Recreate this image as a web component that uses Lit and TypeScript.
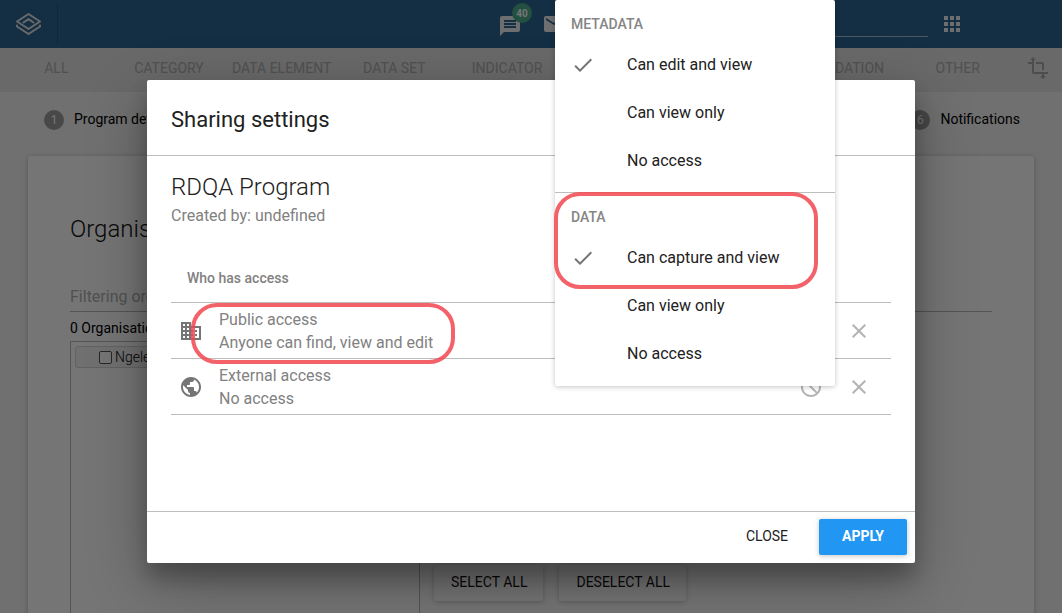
import { LitElement, html, css, svg, nothing } from "lit";
import { customElement, property, state } from "lit/decorators.js";

const icons: Record<string, unknown> = {
  message: svg`<path d="M20 2H4c-1.1 0-1.99.9-1.99 2L2 22l4-4h14c1.1 0 2-.9 2-2V4c0-1.1-.9-2-2-2zm-2 12H6v-2h12v2zm0-3H6V9h12v2zm0-3H6V6h12v2z"/>`,
  mail: svg`<path d="M20 4H4c-1.1 0-1.99.9-1.99 2L2 18c0 1.1.9 2 2 2h16c1.1 0 2-.9 2-2V6c0-1.1-.9-2-2-2zm0 4l-8 5-8-5V6l8 5 8-5v2z"/>`,
  apps: svg`<path d="M4 8h4V4H4v4zm6 12h4v-4h-4v4zm-6 0h4v-4H4v4zm0-6h4v-4H4v4zm6 0h4v-4h-4v4zm6-10v4h4V4h-4zm-6 4h4V4h-4v4zm6 6h4v-4h-4v4zm0 6h4v-4h-4v4z"/>`,
  transform: svg`<path d="M22 18v-2H8V4h2L7 1 4 4h2v2H2v2h4v8c0 1.1.9 2 2 2h8v2h-2l3 3 3-3h-2v-2h4zM10 8h6v6h2V8c0-1.1-.9-2-2-2h-6v2z"/>`,
  business: svg`<path d="M12 7V3H2v18h20V7H12zM6 19H4v-2h2v2zm0-4H4v-2h2v2zm0-4H4V9h2v2zm0-4H4V5h2v2zm4 12H8v-2h2v2zm0-4H8v-2h2v2zm0-4H8V9h2v2zm0-4H8V5h2v2zm10 12h-8v-2h2v-2h-2v-2h2v-2h-2V9h8v10zm-2-8h-2v2h2v-2zm0 4h-2v2h2v-2z"/>`,
  globe: svg`<path d="M12 2C6.48 2 2 6.48 2 12s4.48 10 10 10 10-4.48 10-10S17.52 2 12 2zm-1 17.93c-3.95-.49-7-3.85-7-7.93 0-.62.08-1.21.21-1.79L9 15v1c0 1.1.9 2 2 2v1.93zm6.9-2.54c-.26-.81-1-1.39-1.9-1.39h-1v-3c0-.55-.45-1-1-1H8v-2h2c.55 0 1-.45 1-1V7h2c1.1 0 2-.9 2-2v-.41c2.93 1.19 5 4.06 5 7.41 0 2.08-.8 3.97-2.1 5.39z"/>`,
  block: svg`<path d="M12 2C6.48 2 2 6.48 2 12s4.48 10 10 10 10-4.48 10-10S17.52 2 12 2zm0 18c-4.42 0-8-3.58-8-8 0-1.85.63-3.55 1.69-4.9L16.9 18.31C15.55 19.37 13.85 20 12 20zm6.31-3.1L7.1 5.69C8.45 4.63 10.15 4 12 4c4.42 0 8 3.58 8 8 0 1.85-.63 3.55-1.69 4.9z"/>`,
  close: svg`<path d="M19 6.41L17.59 5 12 10.59 6.41 5 5 6.41 10.59 12 5 17.59 6.41 19 12 13.41 17.59 19 19 17.59 13.41 12z"/>`,
  check: svg`<path d="M9 16.17L4.83 12l-1.42 1.41L9 19 21 7l-1.41-1.41z"/>`,
};

const icon = (name: string) =>
  html`<svg class="icon" width="24" height="24" viewBox="0 0 24 24" fill="currentColor" aria-hidden="true">${icons[name]}</svg>`;

const base = css`
  * { box-sizing: border-box; }
  h1, h2, h3, p, ul { margin: 0; padding: 0; }
  ul { list-style: none; }
  button, input { font-family: inherit; }
  button { border: 0; background: none; padding: 0; cursor: pointer; }
  .icon { display: block; flex: none; }
`;

@customElement("app-header")
class AppHeader extends LitElement {
  static styles = [base, css`
    :host { display: block; }
    .bar { height: 48px; background: #2c6693; color: #fff; display: flex; align-items: center; }
    .home { width: 58px; height: 42px; padding-left: 16px; display: flex; align-items: center; border-right: 1px solid #24557b; color: #e4e6e8; }
    .tools { flex: 1; display: flex; justify-content: flex-end; align-items: center; padding-right: 98px; color: #eef0f2; }
    .message { position: relative; display: flex; padding-top: 4px; margin-right: 20px; }
    .badge { position: absolute; left: 14px; top: -7px; width: 20px; height: 20px; border-radius: 50%; background: #4cae8c; color: #fff; font: 700 10px/21px Roboto, sans-serif; text-align: center; }
    .mail { display: flex; }
    .search { width: 250px; margin: 0 12px 0 112px; height: 26px; border: 0; border-bottom: 1px solid #a9bdce; background: none; color: #fff; align-self: center; }
    .apps { display: flex; }
    .tabs { height: 44px; padding-bottom: 4px; background: #e4e4e4; display: flex; align-items: center; }
    .tab { flex: 1 1 0; min-width: 0; text-align: center; font: 400 14px/20px Roboto, sans-serif; color: #b0b0b0; text-decoration: none; white-space: nowrap; }
    .resize { width: 48px; display: flex; justify-content: center; color: #a8a8a8; }
    .mail, .apps, .message { color: inherit; }
  `];

  private tabs = ["ALL", "CATEGORY", "DATA ELEMENT", "DATA SET", "INDICATOR", "ORGANISATION UNIT", "PROGRAM", "VALIDATION", "OTHER"];

  render() {
    return html`
      <header class="bar">
        <a class="home" href="#" aria-label="Home">
          <svg width="25" height="24" viewBox="0 0 25 24" fill="none" stroke="currentColor" stroke-width="2" stroke-linejoin="round" stroke-linecap="round" aria-hidden="true">
            <path d="M12.5 2L24 9.5 12.5 17 1 9.5z" />
            <path d="M1 13.5v1L12.5 22 24 14.5v-1" />
            <path d="M7.500 10.500l5-3.300 5 3.300" />
          </svg>
        </a>
        <div class="tools">
          <button class="message" aria-label="Messages">${icon("message")}<span class="badge">40</span></button>
          <button class="mail" aria-label="Interpretations">${icon("mail")}</button>
          <input class="search" type="text" aria-label="Search apps" />
          <button class="apps" aria-label="Apps">${icon("apps")}</button>
        </div>
      </header>
      <nav class="tabs">
        ${this.tabs.map((t) => html`<a class="tab" href="#">${t}</a>`)}
        <button class="resize" aria-label="Resize">${icon("transform")}</button>
      </nav>`;
  }
}

@customElement("program-form")
class ProgramForm extends LitElement {
  static styles = [base, css`
    :host { display: block; padding: 0 28px; }
    .steps { height: 64px; padding: 0 14px 8px 16px; display: flex; justify-content: space-between; align-items: center; }
    .step { display: flex; align-items: center; gap: 10px; font: 400 14px/20px Roboto, sans-serif; color: #000; }
    .label { padding-bottom: 2px; }
    .number { width: 20px; height: 20px; border-radius: 50%; background: #9e9e9e; color: #fff; font-size: 12px; text-align: center; }
    .card { background: #fff; border-radius: 2px; box-shadow: 0 1px 6px rgba(0,0,0,.12), 0 1px 4px rgba(0,0,0,.12); padding: 56px 42px; }
    .heading { font: 300 24px/34px Roboto, sans-serif; color: #111; }
    .filter { display: block; width: 100%; margin-top: 36px; height: 30px; padding: 0; border: 0; border-bottom: 1px solid #b8b8b8; background: none; font: 400 16px/24px Roboto, sans-serif; }
    .filter::placeholder { color: #b0b0b0; opacity: 1; }
    .count { margin-top: 6px; font: 400 14px/20px Roboto, sans-serif; color: #000; }
    .units { margin-top: 3px; display: grid; grid-template-columns: 350px 1fr; gap: 14px; }
    .tree { height: 300px; padding: 4px; border: 1px solid #b8b8b8; }
    .node { display: flex; align-items: center; height: 22px; padding-left: 23px; gap: 3px; border: 1px solid #d6d6d6; border-radius: 3px; background: #f5f5f5; font: 300 14px/20px Roboto, sans-serif; color: #000; }
    .node input { appearance: none; width: 13px; height: 13px; margin: 0; border: 1px solid #555; border-radius: 2px; background: #fff; }
    .actions { align-self: end; display: flex; gap: 16px; padding-bottom: 40px; }
    .raised { height: 36px; padding: 0 16px 2px 17px; border-radius: 2px; background: #fff; color: #111; font: 400 14px/34px Roboto, sans-serif; box-shadow: 0 1px 6px rgba(0,0,0,.12), 0 1px 4px rgba(0,0,0,.12); }
  `];

  render() {
    return html`
      <div class="steps">
        <div class="step"><span class="number">1</span><span class="label">Program details</span></div>
        <div class="step"><span class="number">6</span><span class="label">Notifications</span></div>
      </div>
      <section class="card">
        <h2 class="heading">Organisation units</h2>
        <input class="filter" type="text" aria-label="Filter" placeholder="Filtering organisation units by name" />
        <p class="count">0 Organisation units selected</p>
        <div class="units">
          <div class="tree"><label class="node"><input type="checkbox" />Ngelehun</label></div>
          <div class="actions">
            <button class="raised">SELECT ALL</button>
            <button class="raised">DESELECT ALL</button>
          </div>
        </div>
      </section>`;
  }
}

@customElement("access-menu")
class AccessMenu extends LitElement {
  static styles = [base, css`
    :host { display: block; width: 280px; padding-bottom: 1px; background: #fff; border-radius: 2px; box-shadow: 0 1px 6px rgba(0,0,0,.12), 0 1px 4px rgba(0,0,0,.12); }
    .group { position: relative; padding: 8px 0 7px; }
    .group + .group { border-top: 1px solid #bdbdbd; }
    .title { padding: 0 0 1px 16px; font: 500 14px/32px Roboto, sans-serif; color: #858585; }
    .option { width: 100%; height: 48px; padding-left: 16px; display: flex; align-items: center; text-align: left; font: 400 16px/24px Roboto, sans-serif; color: #212121; }
    .mark { width: 56px; height: 24px; color: #757575; }
    .ring { position: absolute; left: -1px; top: -1px; width: 264px; height: 97px; border: 4px solid rgba(242,72,80,.86); border-radius: 26px; pointer-events: none; }
  `];

  @property({ attribute: false }) groups: { title: string; options: string[]; ring?: boolean }[] = [
    { title: "METADATA", options: ["Can edit and view", "Can view only", "No access"] },
    { title: "DATA", options: ["Can capture and view", "Can view only", "No access"], ring: true },
  ];

  @state() private chosen = [0, 0];

  private choose(group: number, option: number) {
    this.chosen = this.chosen.map((c, i) => (i === group ? option : c));
  }

  render() {
    return html`${this.groups.map((g, gi) => html`
      <div class="group" role="group" aria-label=${g.title}>
        <h3 class="title">${g.title}</h3>
        ${g.options.map((o, oi) => html`
          <button class="option" role="menuitemradio" aria-checked=${this.chosen[gi] === oi} @click=${() => this.choose(gi, oi)}>
            <span class="mark">${this.chosen[gi] === oi ? icon("check") : nothing}</span>${o}
          </button>`)}
        ${g.ring ? html`<div class="ring"></div>` : nothing}
      </div>`)}`;
  }
}

@customElement("sharing-dialog")
class SharingDialog extends LitElement {
  static styles = [base, css`
    :host { display: block; position: relative; width: 100%; max-width: 768px; background: #fff; border-radius: 2px; box-shadow: 0 19px 60px rgba(0,0,0,.3), 0 15px 20px rgba(0,0,0,.22); font-family: Roboto, sans-serif; }
    .title { padding: 24px 24px 19px; border-bottom: 1px solid #bdbdbd; font-size: 22px; line-height: 32px; font-weight: 400; color: #212121; }
    .body { padding: 16px 24px 96px; }
    .name { font-size: 24px; line-height: 30px; font-weight: 300; color: #212121; }
    .author { font-size: 16px; line-height: 28px; color: #818181; }
    .who { margin-top: 24px; padding-left: 16px; border-bottom: 1px solid #bdbdbd; font-size: 14px; line-height: 48px; font-weight: 500; color: #818181; }
    .row { position: relative; height: 56px; padding: 0 8px; border-bottom: 1px solid #bdbdbd; display: flex; align-items: center; color: #757575; }
    .text { flex: 1; padding-left: 16px; font-size: 16px; line-height: 23px; color: #818181; }
    .action { width: 48px; height: 48px; display: flex; align-items: center; justify-content: center; color: #b3b3b3; }
    .ring { position: absolute; left: 20px; top: 0; width: 264px; height: 61px; border: 4px solid rgba(242,72,80,.86); border-radius: 26px; pointer-events: none; }
    .footer { border-top: 1px solid #bdbdbd; padding: 7px 8px 8px; display: flex; justify-content: flex-end; gap: 8px; }
    .button { min-width: 88px; height: 36px; padding-bottom: 2px; border-radius: 2px; font-size: 14px; line-height: 34px; color: #212121; }
    .primary { background: #2196f3; color: #fff; font-weight: 700; box-shadow: 0 1px 6px rgba(0,0,0,.12), 0 1px 4px rgba(0,0,0,.12); }
    .menu { position: absolute; top: -80px; right: 80px; }
  `];

  private rows = [
    { icon: "business", name: "Public access", access: "Anyone can find, view and edit", ring: true },
    { icon: "globe", name: "External access", access: "No access", ring: false },
  ];

  render() {
    return html`
      <h1 class="title">Sharing settings</h1>
      <div class="body">
        <h2 class="name">RDQA Program</h2>
        <p class="author">Created by: undefined</p>
        <h3 class="who">Who has access</h3>
        <ul>
          ${this.rows.map((r) => html`
            <li class="row">
              ${icon(r.icon)}
              <div class="text"><p>${r.name}</p><p>${r.access}</p></div>
              <button class="action" aria-label="Access level">${icon("block")}</button>
              <button class="action" aria-label="Remove">${icon("close")}</button>
              ${r.ring ? html`<div class="ring"></div>` : nothing}
            </li>`)}
        </ul>
      </div>
      <div class="footer">
        <button class="button">CLOSE</button>
        <button class="button primary">APPLY</button>
      </div>
      <access-menu class="menu" role="menu"></access-menu>`;
  }
}

@customElement("app-root")
class AppRoot extends LitElement {
  static styles = [base, css`
    :host { display: block; position: relative; height: 100vh; overflow: hidden; background: #f3f3f3; font-family: Roboto, sans-serif; }
    .overlay { position: absolute; inset: 0; background: rgba(0,0,0,.54); display: flex; justify-content: center; align-items: flex-start; padding-top: 80px; }
  `];

  render() {
    return html`
      <app-header></app-header>
      <program-form></program-form>
      <div class="overlay"><sharing-dialog role="dialog" aria-modal="true" aria-label="Sharing settings"></sharing-dialog></div>`;
  }
}
